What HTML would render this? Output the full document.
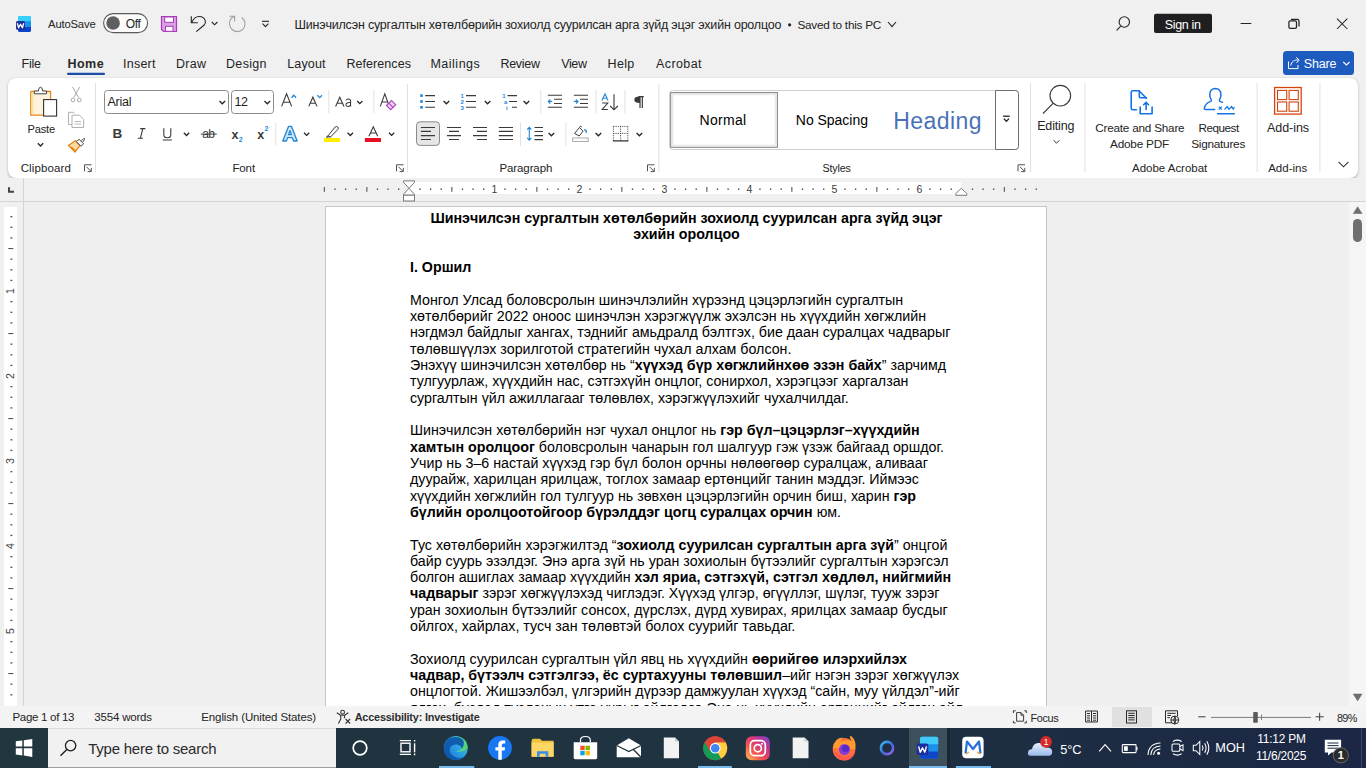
<!DOCTYPE html>
<html><head><meta charset="utf-8">
<style>
*{box-sizing:border-box;margin:0;padding:0}
html,body{width:1366px;height:768px;overflow:hidden;background:#f0f0f0;font-family:"Liberation Sans",sans-serif;color:#242424;position:relative}
.a{position:absolute}
.tx{position:absolute;white-space:nowrap;line-height:0;height:0}
svg.ov{position:absolute;left:0;top:0;width:1366px;height:768px;overflow:visible}
.ln{position:absolute;left:410px;white-space:nowrap;font-size:14.24px;line-height:16.36px;color:#000}
</style></head><body>

<!-- ribbon -->
<div class="a" style="left:8px;top:78px;width:1350px;height:100px;background:#fff;border-radius:8px;box-shadow:0 1.5px 3px rgba(0,0,0,0.2),0 0 1px rgba(0,0,0,0.12)"></div>

<!-- doc area -->
<div class="a" style="left:24px;top:202px;width:1325px;height:505px;background:#efefef"></div>
<div class="a" style="left:325px;top:206px;width:722px;height:520px;background:#fff;border:1px solid #c6c6c6"></div>

<div id="doctext">
<div class="ln" style="top:209.90px;left:410px;width:553px;text-align:center"><b>Шинэчилсэн сургалтын хөтөлбөрийн зохиолд суурилсан арга зүйд эцэг</b></div>
<div class="ln" style="top:226.23px;left:410px;width:553px;text-align:center"><b>эхийн оролцоо</b></div>
<div class="ln" style="top:258.89px"><b>I. Оршил</b></div>
<div class="ln" style="top:291.55px">Монгол Улсад боловсролын шинэчлэлийн хүрээнд цэцэрлэгийн сургалтын</div>
<div class="ln" style="top:307.88px">хөтөлбөрийг 2022 оноос шинэчлэн хэрэгжүүлж эхэлсэн нь хүүхдийн хөгжлийн</div>
<div class="ln" style="top:324.21px">нэгдмэл байдлыг хангах, тэднийг амьдралд бэлтгэх, бие даан суралцах чадварыг</div>
<div class="ln" style="top:340.54px">төлөвшүүлэх зорилготой стратегийн чухал алхам болсон.</div>
<div class="ln" style="top:356.87px">Энэхүү шинэчилсэн хөтөлбөр нь “<b>хүүхэд бүр хөгжлийнхөө эзэн байх</b>” зарчимд</div>
<div class="ln" style="top:373.20px">тулгуурлаж, хүүхдийн нас, сэтгэхүйн онцлог, сонирхол, хэрэгцээг харгалзан</div>
<div class="ln" style="top:389.53px">сургалтын үйл ажиллагааг төлөвлөх, хэрэгжүүлэхийг чухалчилдаг.</div>
<div class="ln" style="top:422.19px">Шинэчилсэн хөтөлбөрийн нэг чухал онцлог нь <b>гэр бүл–цэцэрлэг–хүүхдийн</b></div>
<div class="ln" style="top:438.52px"><b>хамтын оролцоог</b> боловсролын чанарын гол шалгуур гэж үзэж байгаад оршдог.</div>
<div class="ln" style="top:454.85px">Учир нь 3–6 настай хүүхэд гэр бүл болон орчны нөлөөгөөр суралцаж, аливааг</div>
<div class="ln" style="top:471.18px">дуурайж, харилцан ярилцаж, тоглох замаар ертөнцийг танин мэддэг. Иймээс</div>
<div class="ln" style="top:487.51px">хүүхдийн хөгжлийн гол тулгуур нь зөвхөн цэцэрлэгийн орчин биш, харин <b>гэр</b></div>
<div class="ln" style="top:503.84px"><b>бүлийн оролцоотойгоор бүрэлддэг цогц суралцах орчин</b> юм.</div>
<div class="ln" style="top:536.50px">Тус хөтөлбөрийн хэрэгжилтэд “<b>зохиолд суурилсан сургалтын арга зүй</b>” онцгой</div>
<div class="ln" style="top:552.83px">байр суурь эзэлдэг. Энэ арга зүй нь уран зохиолын бүтээлийг сургалтын хэрэгсэл</div>
<div class="ln" style="top:569.16px">болгон ашиглах замаар хүүхдийн <b>хэл яриа, сэтгэхүй, сэтгэл хөдлөл, нийгмийн</b></div>
<div class="ln" style="top:585.49px"><b>чадварыг</b> зэрэг хөгжүүлэхэд чиглэдэг. Хүүхэд үлгэр, өгүүллэг, шүлэг, тууж зэрэг</div>
<div class="ln" style="top:601.82px">уран зохиолын бүтээлийг сонсох, дүрслэх, дүрд хувирах, ярилцах замаар бусдыг</div>
<div class="ln" style="top:618.15px">ойлгох, хайрлах, тусч зан төлөвтэй болох суурийг тавьдаг.</div>
<div class="ln" style="top:650.81px">Зохиолд суурилсан сургалтын үйл явц нь хүүхдийн <b>өөрийгөө илэрхийлэх</b></div>
<div class="ln" style="top:667.14px"><b>чадвар, бүтээлч сэтгэлгээ, ёс суртахууны төлөвшил</b>–ийг нэгэн зэрэг хөгжүүлэх</div>
<div class="ln" style="top:683.47px">онцлогтой. Жишээлбэл, үлгэрийн дүрээр дамжуулан хүүхэд “сайн, муу үйлдэл”-ийг</div>
<div class="ln" style="top:699.80px">ялгах, бусдад туслахын утга учрыг ойлгодог. Энэ нь хүүхдийн ертөнцийг ойлгох ойл</div>
</div>

<!-- ruler band -->
<div class="a" style="left:0;top:178px;width:1366px;height:24px;background:#f0f0f0"></div>
<div class="a" style="left:409px;top:182px;width:552px;height:12px;background:#fff"></div>
<div class="a" style="left:0;top:201px;width:1366px;height:1px;background:#d4d4d4"></div>
<!-- vertical ruler -->
<div class="a" style="left:23px;top:178px;width:1px;height:529px;background:#d4d4d4"></div>
<div class="a" style="left:4px;top:207px;width:13px;height:500px;background:#fff"></div>
<!-- scrollbar -->
<div class="a" style="left:1349px;top:202px;width:17px;height:505px;background:#f5f5f5"></div>
<div class="a" style="left:1353px;top:219px;width:9px;height:23px;background:#6f6f6f;border-radius:4.5px"></div>

<!-- status bar -->
<div class="a" style="left:0;top:706px;width:1366px;height:22px;background:#f3f3f3"></div>
<div class="a" style="left:1112px;top:707px;width:40px;height:20px;background:#e0e0e0"></div>

<!-- taskbar -->
<div class="a" style="left:0;top:728px;width:1366px;height:40px;background:linear-gradient(90deg,#21363f 0%,#1f3240 55%,#1b2745 100%)"></div>
<div class="a" style="left:48px;top:728px;width:288px;height:40px;background:#f1f1f1;border-top:1px solid #dcdcdc;border-bottom:1px solid #a0a0a0"></div>
<div class="a" style="left:909px;top:728px;width:38px;height:40px;background:#3d505c"></div>

<svg class="ov" viewBox="0 0 1366 768">
<defs><g id="launch"><path d="M0.5 7 L0.5 0.5 L7.5 0.5" fill="none" stroke="#505050" stroke-width="1"/><path d="M2.5 2.5 L7 7 M7.3 3.6 L7.3 7.3 L3.6 7.3" fill="none" stroke="#505050" stroke-width="1"/></g>
<g id="chev"><path d="M0 0 L2.8 2.8 L5.6 0" fill="none" stroke="#242424" stroke-width="1.25"/></g></defs>
<!-- ===== TITLE BAR ===== -->
<!-- word icon -->
<rect x="18" y="16" width="13" height="16" rx="1.8" fill="#1a90e6"/>
<path d="M18 17.8 Q18 16 19.8 16 L29.2 16 Q31 16 31 17.8 L31 21.3 L18 21.3Z" fill="#36d1fb"/>
<path d="M18 26.9 L31 26.9 L31 30.2 Q31 32 29.2 32 L19.8 32 Q18 32 18 30.2Z" fill="#0b42c9"/>
<rect x="16" y="21" width="9" height="8.8" rx="1.5" fill="#1d2f9e"/>
<path d="M17.3 23.2 L18.6 27.8 L20.5 24.2 L22.4 27.8 L23.7 23.2" fill="none" stroke="#fff" stroke-width="1.3" stroke-linejoin="round"/>
<!-- autosave toggle -->
<rect x="103.6" y="13.6" width="44" height="19" rx="9.5" fill="#fbfbfb" stroke="#5a5a5a" stroke-width="1.1"/>
<circle cx="113.1" cy="23" r="6.8" fill="#5f5f5f"/>
<!-- save -->
<path d="M161.5 16.5 L176.5 16.5 L176.5 31.5 L163.5 31.5 L161.5 29.5Z" fill="#dc9fe6" stroke="#a83bb8" stroke-width="1.2"/>
<rect x="164.7" y="17" width="8.8" height="5.3" fill="#fff" stroke="#a83bb8" stroke-width="1"/>
<rect x="165.5" y="26.3" width="7.5" height="5" fill="#fff" stroke="#a83bb8" stroke-width="1"/>
<!-- undo -->
<path d="M191.3 16.2 L191.3 22.7 L197.8 22.7" fill="none" stroke="#242424" stroke-width="1.1"/>
<path d="M191.8 22.2 C194 17.5 198 15.8 201.5 16.8 C205.5 18 206.5 22.5 204.2 25 L196.3 31.6" fill="none" stroke="#242424" stroke-width="1.1"/>
<path d="M211.8 22 L214.6 24.8 L217.4 22" fill="none" stroke="#242424" stroke-width="1.1"/>
<!-- redo -->
<path d="M234.6 16.2 C231 17.5 229.3 20.5 229.5 24 C229.8 28.5 233.5 31.6 237.5 31.6 C241.8 31.6 245 28 245 24 C245 21.5 243.8 19 241.7 17.5" fill="none" stroke="#a0a0a0" stroke-width="1.1"/>
<path d="M229.4 16.2 L234.6 16.2 L234.6 21.4" fill="none" stroke="#a0a0a0" stroke-width="1.1"/>
<!-- customize -->
<path d="M262 21.3 L269 21.3" stroke="#242424" stroke-width="1.1"/>
<path d="M262.6 23.6 L265.5 26.6 L268.4 23.6" fill="none" stroke="#242424" stroke-width="1.1"/>
<!-- title bullet + chevron -->
<circle cx="789.6" cy="24.8" r="1.6" fill="#242424"/>
<path d="M888 22 L892 26.6 L896 22" fill="none" stroke="#242424" stroke-width="1.1"/>
<!-- search -->
<circle cx="1124.3" cy="22" r="5.2" fill="none" stroke="#242424" stroke-width="1.1"/>
<path d="M1116.6 30.4 L1120.6 26.3" stroke="#242424" stroke-width="1.2"/>
<!-- sign in -->
<rect x="1154" y="13.8" width="58" height="19.2" rx="2" fill="#1f1f1f"/>
<!-- window controls -->
<path d="M1240.6 23.5 L1251.3 23.5" stroke="#242424" stroke-width="1"/>
<rect x="1288.9" y="20.9" width="7.6" height="7.5" rx="1.3" fill="none" stroke="#242424" stroke-width="1.25"/>
<path d="M1291 19.4 L1297.2 19.4 Q1299 19.4 1299 21.2 L1299 26.4" fill="none" stroke="#242424" stroke-width="1.25"/>
<path d="M1337 18.7 L1347.3 29 M1347.3 18.7 L1337 29" stroke="#242424" stroke-width="1.05"/>

<!-- ===== TABS ===== -->
<rect x="67" y="72.8" width="38" height="2.2" rx="1" fill="#1a4ca8"/>
<rect x="1283" y="50.9" width="71" height="24" rx="3.5" fill="#1d5bbf"/>
<path d="M1288.5 61.5 L1288.5 68.6 L1298 68.6 L1298 65" fill="none" stroke="#fff" stroke-width="1"/>
<path d="M1290.8 65.5 C1291.5 61.5 1294.5 59.8 1298 60" fill="none" stroke="#fff" stroke-width="1"/>
<path d="M1296.2 57.4 L1299.2 60 L1296.5 63" fill="none" stroke="#fff" stroke-width="1"/>
<path d="M1343.3 62 L1346.4 65 L1349.6 62" fill="none" stroke="#fff" stroke-width="1.1"/>
<!-- ===== RIBBON: CLIPBOARD ===== -->
<path d="M30.8 91.5 L50.5 91.5 L50.5 99 M43 115 L30.8 115 L30.8 91.5" fill="none" stroke="#e8820c" stroke-width="1.3"/>
<rect x="32" y="92.8" width="17.8" height="21.6" fill="#fdf3dc"/><rect x="31.5" y="92.3" width="2" height="22" fill="#fbe3a6"/>
<path d="M34.3 93.8 L34.3 91 L38.3 91 Q38.6 87.2 40.5 87.2 Q42.4 87.2 42.7 91 L46.6 91 L46.6 93.8Z" fill="#fff" stroke="#444" stroke-width="1"/>
<rect x="43.6" y="99.6" width="13" height="16.5" fill="#fff" stroke="#333" stroke-width="1.1"/>
<path d="M37.8 143.3 L40.5 146 L43.2 143.3" fill="none" stroke="#242424" stroke-width="1.25"/>
<!-- cut -->
<path d="M72.5 86.8 L78.5 97.5 M79.8 86.8 L73.8 97.5" stroke="#a9a9a9" stroke-width="1"/>
<circle cx="73" cy="100" r="1.9" fill="none" stroke="#a9a9a9" stroke-width="1"/>
<circle cx="79.3" cy="100" r="1.9" fill="none" stroke="#a9a9a9" stroke-width="1"/>
<!-- copy -->
<path d="M72 124.5 L68.5 124.5 L68.5 112.3 L73.5 112.3 L74.5 113.5" fill="none" stroke="#b0b0b0" stroke-width="1"/>
<path d="M72 115.2 L79.5 115.2 L83.6 119.3 L83.6 127.5 L72 127.5Z" fill="#fff" stroke="#b0b0b0" stroke-width="1"/>
<path d="M74.5 121.5 L81 121.5 M74.5 124 L81 124" stroke="#b0b0b0" stroke-width="0.9"/>
<!-- format painter -->
<path d="M68.5 145.5 L75.5 140.5 L80 145.5 L75 152.2Z" fill="#fbd9a8" stroke="#e8820c" stroke-width="1.2"/>
<path d="M71 147 L76 151" stroke="#e8820c" stroke-width="1.2"/>
<path d="M76.5 141.8 L79 139.2 L83.5 143.8 L81 146.3Z" fill="#fff" stroke="#444" stroke-width="1"/>
<path d="M81.5 140.8 L83.8 138.5 Q84.8 138.2 84.5 139.5 L83 141.8" fill="none" stroke="#444" stroke-width="1"/>
<!-- launcher -->
<use href="#launch" x="84" y="164.3"/>
<rect x="95" y="83" width="1" height="89" fill="#e1e1e1"/>

<!-- ===== FONT ===== -->
<rect x="104.5" y="90.5" width="124" height="23" rx="3" fill="#fff" stroke="#8d8d8d" stroke-width="1"/>
<path d="M219.5 101 L222.3 103.8 L225.1 101" fill="none" stroke="#242424" stroke-width="1.25"/>
<rect x="231.5" y="90.5" width="42" height="23" rx="3" fill="#fff" stroke="#8d8d8d" stroke-width="1"/>
<path d="M264.5 101 L267.3 103.8 L270.1 101" fill="none" stroke="#242424" stroke-width="1.25"/>
<!-- grow/shrink -->
<path d="M281.6 106.4 L286.6 93.8 L291.6 106.4 M283.4 102.2 L289.8 102.2" fill="none" stroke="#3a3a3a" stroke-width="1.1"/>
<path d="M291.5 97.8 L293.8 95.3 L296.1 97.8" fill="none" stroke="#1f86d6" stroke-width="1.3"/>
<path d="M308.8 106.4 L312.9 97.2 L317 106.4 M310.2 103.2 L315.6 103.2" fill="none" stroke="#3a3a3a" stroke-width="1.1"/>
<path d="M317.4 95.2 L319.7 97.6 L322 95.2" fill="none" stroke="#1f86d6" stroke-width="1.3"/>
<rect x="328.3" y="90" width="1" height="23" fill="#e1e1e1"/>
<!-- Aa -->
<path d="M335.6 106.4 L339.8 97.2 L344 106.4 M336.9 103.3 L342.7 103.3" fill="none" stroke="#3a3a3a" stroke-width="1.1"/>
<path d="M350.6 101 Q350.5 99 348.3 99 Q346.4 99 346 100.4 M350.6 101 L350.6 106.4 M350.6 102.6 Q346 102.3 345.9 104.5 Q346 106.5 348 106.5 Q350.2 106.4 350.6 104.6" fill="none" stroke="#3a3a3a" stroke-width="1.05"/>
<path d="M357.2 101 L359.8 103.6 L362.4 101" fill="none" stroke="#242424" stroke-width="1.25"/>
<rect x="373.3" y="90" width="1" height="23" fill="#e1e1e1"/>
<!-- clear formatting -->
<path d="M380.3 106.4 L384.8 93.8 L389.3 106.4 M382 102 L387.6 102" fill="none" stroke="#3a3a3a" stroke-width="1.1"/>
<path d="M386.5 105.5 L391.5 100.5 L395.7 104.7 L390.7 109.7Z" fill="#f3d6f7" stroke="#b146c2" stroke-width="1.2"/>
<path d="M388.8 103.2 L393 107.4" stroke="#b146c2" stroke-width="1.2"/>
<!-- row 2 -->
<text x="112.4" y="138.2" font-family="Liberation Sans" font-weight="bold" font-size="13.5" fill="#3a3a3a">B</text>
<path d="M140.2 128.6 L145.4 128.6 M137.8 138.2 L143 138.2 M142.8 128.6 L140.4 138.2" fill="none" stroke="#3a3a3a" stroke-width="1.1"/>
<path d="M163.8 128.2 L163.8 134.5 Q163.8 137.8 167.3 137.8 Q170.8 137.8 170.8 134.5 L170.8 128.2 M162.7 140 L171.9 140" fill="none" stroke="#3a3a3a" stroke-width="1.1"/>
<path d="M183.8 132.8 L186.5 135.5 L189.2 132.8" fill="none" stroke="#242424" stroke-width="1.25"/>
<text x="202.3" y="138.4" font-family="Liberation Sans" font-size="12" fill="#3a3a3a" letter-spacing="-0.8">ab</text>
<path d="M200.8 134.1 L216.8 134.1" stroke="#3a3a3a" stroke-width="1"/>
<text x="231.5" y="138.5" font-family="Liberation Sans" font-weight="bold" font-size="12.5" fill="#3a3a3a">x</text>
<text x="238.8" y="142" font-family="Liberation Sans" font-weight="bold" font-size="7" fill="#1f86d6">2</text>
<text x="257.2" y="138.5" font-family="Liberation Sans" font-weight="bold" font-size="12.5" fill="#3a3a3a">x</text>
<text x="264.5" y="131" font-family="Liberation Sans" font-weight="bold" font-size="7" fill="#1f86d6">2</text>
<rect x="275.3" y="122.7" width="1" height="23" fill="#e1e1e1"/>
<!-- text effects -->
<path d="M282.8 141 L288.6 126.3 L291.4 126.3 L297.2 141 L293.6 141 L292.4 137.6 L287.6 137.6 L286.4 141Z M288.6 134.6 L291.4 134.6 L290 130.6Z" fill="#cfe6fa" stroke="#1f86d6" stroke-width="1.3" stroke-linejoin="round"/>
<path d="M304 132.8 L306.6 135.4 L309.2 132.8" fill="none" stroke="#242424" stroke-width="1.25"/>
<!-- highlight -->
<path d="M328 135.8 L335.2 127 Q336.5 125.8 337.8 127 Q339 128.3 337.8 129.5 L330.5 137 Z" fill="#fff" stroke="#3a3a3a" stroke-width="1"/>
<path d="M328 135.8 L326.3 137.2 L328.6 137 L330.5 137" fill="#777" stroke="#3a3a3a" stroke-width="0.9"/>
<rect x="323.9" y="138" width="16.2" height="4" fill="#ffee00"/>
<path d="M347.6 132.8 L350.3 135.5 L353 132.8" fill="none" stroke="#242424" stroke-width="1.25"/>
<!-- font color -->
<path d="M368.9 136.2 L373.3 126.8 L377.7 136.2 M370.3 133 L376.3 133" fill="none" stroke="#3a3a3a" stroke-width="1.1"/>
<rect x="364.9" y="138" width="16.1" height="4" fill="#e81123"/>
<path d="M389 132.8 L391.6 135.4 L394.2 132.8" fill="none" stroke="#242424" stroke-width="1.25"/>
<!-- launcher -->
<use href="#launch" x="396" y="164.3"/>
<rect x="407" y="84" width="1" height="88" fill="#e1e1e1"/>
<!-- ===== PARAGRAPH ===== -->
<g fill="#1f86d6"><rect x="420.2" y="94.3" width="2.6" height="2.6"/><rect x="420.2" y="100.2" width="2.6" height="2.6"/><rect x="420.2" y="106" width="2.6" height="2.6"/></g>
<path d="M425.2 95.6 L435 95.6 M425.2 101.5 L435 101.5 M425.2 107.3 L435 107.3" stroke="#3a3a3a" stroke-width="1.1"/>
<use href="#chev" x="443.6" y="101"/>
<g font-family="Liberation Sans" font-weight="bold" font-size="6" fill="#1f86d6"><text x="460.6" y="98.2">1</text><text x="460.6" y="104.1">2</text><text x="460.6" y="110">3</text></g>
<path d="M466 95.6 L476 95.6 M466 101.5 L476 101.5 M466 107.3 L476 107.3" stroke="#3a3a3a" stroke-width="1.1"/>
<use href="#chev" x="484.8" y="101"/>
<g font-family="Liberation Sans" font-weight="bold" font-size="6" fill="#1f86d6"><text x="502.2" y="98.2">1</text><text x="504" y="104.1">a</text><text x="506" y="110">i</text></g>
<path d="M507.5 95.6 L517 95.6 M509 101.5 L517 101.5 M512 107.3 L517 107.3" stroke="#3a3a3a" stroke-width="1.1"/>
<use href="#chev" x="523.6" y="101"/>
<rect x="540.3" y="90" width="1" height="23.5" fill="#e1e1e1"/>
<!-- indents -->
<path d="M547.8 95.3 L562 95.3 M554 99.3 L562 99.3 M554 103.5 L562 103.5 M547.8 107.3 L562 107.3" stroke="#3a3a3a" stroke-width="1.1"/>
<path d="M552.2 101.4 L548.3 101.4 M550.3 99.3 L548.3 101.4 L550.3 103.5" fill="none" stroke="#1f86d6" stroke-width="1.1"/>
<path d="M573.8 95.3 L588 95.3 M580 99.3 L588 99.3 M580 103.5 L588 103.5 M573.8 107.3 L588 107.3" stroke="#3a3a3a" stroke-width="1.1"/>
<path d="M573.8 101.4 L578 101.4 M576 99.3 L578 101.4 L576 103.5" fill="none" stroke="#1f86d6" stroke-width="1.1"/>
<rect x="595.4" y="90" width="1" height="23.5" fill="#e1e1e1"/>
<!-- sort -->
<path d="M602 100.5 L605 93.8 L608 100.5 M603 98.3 L607 98.3" fill="none" stroke="#1f86d6" stroke-width="1.1"/>
<path d="M602.2 103 L607.8 103 L602.2 109.5 L607.8 109.5" fill="none" stroke="#3a3a3a" stroke-width="1.1"/>
<path d="M614 94.3 L614 109.8 M610.2 106 L614 109.8 L617.8 106" fill="none" stroke="#3a3a3a" stroke-width="1.1"/>
<rect x="624.4" y="90" width="1" height="23.5" fill="#e1e1e1"/>
<!-- pilcrow -->
<path d="M638.5 96.6 L643.8 96.6 M640 96.6 L640 108 M642.3 96.6 L642.3 108" fill="none" stroke="#3a3a3a" stroke-width="1.2"/>
<path d="M640 96.6 Q634.3 96.5 634.3 99.8 Q634.3 103 640 103Z" fill="#3a3a3a"/>
<!-- align -->
<rect x="416.5" y="121.8" width="23" height="23.6" rx="3.5" fill="#e6e6e6" stroke="#8a8a8a" stroke-width="1"/>
<path d="M420.9 127.5 L435 127.5 M420.9 131.4 L431 131.4 M420.9 135.6 L435 135.6 M420.9 139.5 L431 139.5" stroke="#3a3a3a" stroke-width="1.1"/>
<path d="M446.9 127.5 L461 127.5 M449 131.4 L459 131.4 M446.9 135.6 L461 135.6 M449 139.5 L459 139.5" stroke="#3a3a3a" stroke-width="1.1"/>
<path d="M473 127.5 L487 127.5 M477 131.4 L487 131.4 M473 135.6 L487 135.6 M477 139.5 L487 139.5" stroke="#3a3a3a" stroke-width="1.1"/>
<path d="M498.8 127.5 L513 127.5 M498.8 131.4 L513 131.4 M498.8 135.6 L513 135.6 M498.8 139.5 L513 139.5" stroke="#3a3a3a" stroke-width="1.1"/>
<rect x="520" y="122.3" width="1" height="23.5" fill="#e1e1e1"/>
<!-- line spacing -->
<path d="M529.3 127.5 L529.3 140 M527.2 129.6 L529.3 127.3 L531.4 129.6 M527.2 137.9 L529.3 140.2 L531.4 137.9" fill="none" stroke="#1f86d6" stroke-width="1.1"/>
<path d="M534.5 127.5 L543 127.5 M534.5 131.5 L543 131.5 M534.5 135.6 L543 135.6 M534.5 139.6 L543 139.6" stroke="#3a3a3a" stroke-width="1.1"/>
<use href="#chev" x="548.6" y="133"/>
<rect x="565.4" y="122.3" width="1" height="23.5" fill="#e1e1e1"/>
<!-- shading -->
<path d="M574.5 133.5 L579.5 127.5 L583 131.2 L579.2 136 Z" fill="#fff" stroke="#3a3a3a" stroke-width="1"/>
<path d="M579.5 127.5 Q580 125.5 581.8 126.8" fill="none" stroke="#3a3a3a" stroke-width="1"/>
<path d="M584 130 Q586.5 129 586.2 132.8" fill="none" stroke="#1a6fc2" stroke-width="1.3"/>
<rect x="572.6" y="138" width="15.6" height="3.4" fill="#fff" stroke="#a0a0a0" stroke-width="0.9"/>
<use href="#chev" x="595.6" y="133"/>
<!-- borders -->
<path d="M613.4 126.4 L628 126.4 M613.4 126.4 L613.4 140.5 M627.8 126.4 L627.8 140.5 M620.6 126.4 L620.6 140.5 M613.4 133.4 L628 133.4" fill="none" stroke="#3a3a3a" stroke-width="1" stroke-dasharray="1 1.2"/>
<path d="M612.9 140.9 L628.3 140.9" stroke="#242424" stroke-width="1.2"/>
<use href="#chev" x="636.6" y="133"/>
<use href="#launch" x="647" y="164.3"/>
<rect x="658.3" y="84" width="1" height="88" fill="#e1e1e1"/>

<!-- ===== STYLES ===== -->
<rect x="669.5" y="90.5" width="349" height="59" rx="3" fill="#fff" stroke="#d0d0d0" stroke-width="1"/>
<rect x="670.8" y="92.7" width="106.5" height="54.5" fill="#fff" stroke="#6e6e6e" stroke-width="1"/>
<rect x="672.3" y="94.2" width="103.5" height="51.5" fill="none" stroke="#e8e8e8" stroke-width="2"/>
<path d="M995.5 90.5 L1015.5 90.5 Q1018.5 90.5 1018.5 93.5 L1018.5 146.5 Q1018.5 149.5 1015.5 149.5 L995.5 149.5Z" fill="#fff" stroke="#6e6e6e" stroke-width="1"/>
<path d="M1003.1 116.2 L1009.7 116.2" stroke="#242424" stroke-width="1.3"/>
<path d="M1003.8 118.6 L1006.4 121.3 L1009 118.6" fill="none" stroke="#242424" stroke-width="1.3"/>
<use href="#launch" x="1017.5" y="164.3"/>
<rect x="1030" y="83" width="1" height="89" fill="#e1e1e1"/>

<!-- ===== EDITING ===== -->
<circle cx="1060.3" cy="95.7" r="10.3" fill="none" stroke="#3a3a3a" stroke-width="1.1"/>
<path d="M1043 113.5 L1053.3 103.2" stroke="#3a3a3a" stroke-width="1.1"/>
<path d="M1053.6 140.3 L1056.5 143.2 L1059.4 140.3" fill="none" stroke="#303030" stroke-width="1"/>
<rect x="1084.4" y="83" width="1" height="89" fill="#e1e1e1"/>

<!-- ===== ACROBAT ===== -->
<g fill="none" stroke="#1473e6" stroke-width="1.6" stroke-linejoin="round" stroke-linecap="round">
<path d="M1136.5 109.8 L1132.8 109.8 Q1131.2 109.8 1131.2 108.2 L1131.2 92.4 Q1131.2 90.8 1132.8 90.8 L1139 90.8 L1146.4 98.2"/>
<path d="M1139.3 91 L1139.3 96.6 Q1139.3 97.8 1140.5 97.8 L1146.4 97.8"/>
<path d="M1140.2 107 L1140.2 113.8 L1152.1 113.8 L1152.1 107"/>
<path d="M1146.1 109.6 L1146.1 102.4 M1143.6 104.8 L1146.1 102.3 L1148.6 104.8"/>
</g>
<!-- request signatures -->
<g fill="none" stroke="#1473e6" stroke-width="1.5" stroke-linecap="round">
<path d="M1214.6 109.5 L1205.5 109.5 Q1204.2 109.5 1204.4 108 Q1205.2 103.5 1210.6 101.4 Q1211.8 100.8 1211.2 99.8 Q1209.6 97.5 1209.8 94 Q1210.3 88.6 1215.3 88.4 Q1220.5 88.6 1220.9 94 Q1221.2 97.5 1219.5 99.8 Q1219 100.8 1220.2 101.4 Q1221.6 101.8 1222.5 102.3"/>
<path d="M1217.6 113.8 L1234.3 113.8" stroke-width="1.6"/>
</g>
<g fill="none" stroke="#1473e6" stroke-width="1.2">
<path d="M1218.8 106.6 L1221.8 109.6 M1221.8 106.6 L1218.8 109.6"/>
<path d="M1224.5 109.6 L1227.2 106.6 L1229 109.4 L1231.6 106.6 L1233.2 109.2 L1234.5 107.2"/>
</g>
<rect x="1256.6" y="83" width="1" height="89" fill="#e1e1e1"/>

<!-- ===== ADD-INS ===== -->
<rect x="1274.6" y="87.5" width="26.6" height="26.6" fill="none" stroke="#d3450f" stroke-width="1.3"/>
<rect x="1277.5" y="90.4" width="9.2" height="9.2" fill="none" stroke="#d3450f" stroke-width="1.1"/>
<rect x="1289.1" y="90.4" width="9.2" height="9.2" fill="none" stroke="#d3450f" stroke-width="1.1"/>
<rect x="1277.5" y="102" width="9.2" height="9.2" fill="none" stroke="#d3450f" stroke-width="1.1"/>
<rect x="1289.1" y="102" width="9.2" height="9.2" fill="none" stroke="#d3450f" stroke-width="1.1"/>
<rect x="1319.4" y="83" width="1" height="89" fill="#e1e1e1"/>
<path d="M1338.6 161.8 L1343.5 166.8 L1348.4 161.8" fill="none" stroke="#303030" stroke-width="1.1"/>
<rect x="323.80" y="187" width="1.1" height="4.8" fill="#555"/>
<rect x="334.32" y="188.4" width="1.3" height="1.6" fill="#555"/>
<rect x="344.95" y="188.4" width="1.3" height="1.6" fill="#555"/>
<rect x="355.57" y="188.4" width="1.3" height="1.6" fill="#555"/>
<rect x="366.30" y="187" width="1.1" height="4.8" fill="#555"/>
<rect x="376.82" y="188.4" width="1.3" height="1.6" fill="#555"/>
<rect x="387.45" y="188.4" width="1.3" height="1.6" fill="#555"/>
<rect x="398.07" y="188.4" width="1.3" height="1.6" fill="#555"/>
<rect x="419.32" y="188.4" width="1.3" height="1.6" fill="#555"/>
<rect x="429.95" y="188.4" width="1.3" height="1.6" fill="#555"/>
<rect x="440.57" y="188.4" width="1.3" height="1.6" fill="#555"/>
<rect x="451.30" y="187" width="1.1" height="4.8" fill="#555"/>
<rect x="461.82" y="188.4" width="1.3" height="1.6" fill="#555"/>
<rect x="472.45" y="188.4" width="1.3" height="1.6" fill="#555"/>
<rect x="483.07" y="188.4" width="1.3" height="1.6" fill="#555"/>
<text x="494.30" y="193.2" font-family="Liberation Sans" font-size="10.5" fill="#3c3c3c" text-anchor="middle">1</text>
<rect x="504.32" y="188.4" width="1.3" height="1.6" fill="#555"/>
<rect x="514.95" y="188.4" width="1.3" height="1.6" fill="#555"/>
<rect x="525.57" y="188.4" width="1.3" height="1.6" fill="#555"/>
<rect x="536.30" y="187" width="1.1" height="4.8" fill="#555"/>
<rect x="546.82" y="188.4" width="1.3" height="1.6" fill="#555"/>
<rect x="557.45" y="188.4" width="1.3" height="1.6" fill="#555"/>
<rect x="568.07" y="188.4" width="1.3" height="1.6" fill="#555"/>
<text x="579.30" y="193.2" font-family="Liberation Sans" font-size="10.5" fill="#3c3c3c" text-anchor="middle">2</text>
<rect x="589.32" y="188.4" width="1.3" height="1.6" fill="#555"/>
<rect x="599.95" y="188.4" width="1.3" height="1.6" fill="#555"/>
<rect x="610.57" y="188.4" width="1.3" height="1.6" fill="#555"/>
<rect x="621.30" y="187" width="1.1" height="4.8" fill="#555"/>
<rect x="631.82" y="188.4" width="1.3" height="1.6" fill="#555"/>
<rect x="642.45" y="188.4" width="1.3" height="1.6" fill="#555"/>
<rect x="653.07" y="188.4" width="1.3" height="1.6" fill="#555"/>
<text x="664.30" y="193.2" font-family="Liberation Sans" font-size="10.5" fill="#3c3c3c" text-anchor="middle">3</text>
<rect x="674.32" y="188.4" width="1.3" height="1.6" fill="#555"/>
<rect x="684.95" y="188.4" width="1.3" height="1.6" fill="#555"/>
<rect x="695.57" y="188.4" width="1.3" height="1.6" fill="#555"/>
<rect x="706.30" y="187" width="1.1" height="4.8" fill="#555"/>
<rect x="716.82" y="188.4" width="1.3" height="1.6" fill="#555"/>
<rect x="727.45" y="188.4" width="1.3" height="1.6" fill="#555"/>
<rect x="738.07" y="188.4" width="1.3" height="1.6" fill="#555"/>
<text x="749.30" y="193.2" font-family="Liberation Sans" font-size="10.5" fill="#3c3c3c" text-anchor="middle">4</text>
<rect x="759.32" y="188.4" width="1.3" height="1.6" fill="#555"/>
<rect x="769.95" y="188.4" width="1.3" height="1.6" fill="#555"/>
<rect x="780.57" y="188.4" width="1.3" height="1.6" fill="#555"/>
<rect x="791.30" y="187" width="1.1" height="4.8" fill="#555"/>
<rect x="801.82" y="188.4" width="1.3" height="1.6" fill="#555"/>
<rect x="812.45" y="188.4" width="1.3" height="1.6" fill="#555"/>
<rect x="823.07" y="188.4" width="1.3" height="1.6" fill="#555"/>
<text x="834.30" y="193.2" font-family="Liberation Sans" font-size="10.5" fill="#3c3c3c" text-anchor="middle">5</text>
<rect x="844.32" y="188.4" width="1.3" height="1.6" fill="#555"/>
<rect x="854.95" y="188.4" width="1.3" height="1.6" fill="#555"/>
<rect x="865.57" y="188.4" width="1.3" height="1.6" fill="#555"/>
<rect x="876.30" y="187" width="1.1" height="4.8" fill="#555"/>
<rect x="886.82" y="188.4" width="1.3" height="1.6" fill="#555"/>
<rect x="897.45" y="188.4" width="1.3" height="1.6" fill="#555"/>
<rect x="908.07" y="188.4" width="1.3" height="1.6" fill="#555"/>
<text x="919.30" y="193.2" font-family="Liberation Sans" font-size="10.5" fill="#3c3c3c" text-anchor="middle">6</text>
<rect x="929.32" y="188.4" width="1.3" height="1.6" fill="#555"/>
<rect x="939.95" y="188.4" width="1.3" height="1.6" fill="#555"/>
<rect x="950.57" y="188.4" width="1.3" height="1.6" fill="#555"/>
<rect x="971.82" y="188.4" width="1.3" height="1.6" fill="#555"/>
<rect x="982.45" y="188.4" width="1.3" height="1.6" fill="#555"/>
<rect x="993.07" y="188.4" width="1.3" height="1.6" fill="#555"/>
<rect x="1003.80" y="187" width="1.1" height="4.8" fill="#555"/>
<rect x="1014.32" y="188.4" width="1.3" height="1.6" fill="#555"/>
<rect x="1024.95" y="188.4" width="1.3" height="1.6" fill="#555"/>
<rect x="1035.58" y="188.4" width="1.3" height="1.6" fill="#555"/>
<path d="M403.5 180.9 L414.5 180.9 L414.5 182.3 L409 188.3 L403.5 182.3Z" fill="#fff" stroke="#7a7a7a" stroke-width="1"/>
<path d="M409 188.3 L414.5 194.3 L414.5 195.2 L403.5 195.2 L403.5 194.3Z" fill="#fff" stroke="#7a7a7a" stroke-width="1"/>
<rect x="403.5" y="195.2" width="11" height="5.8" fill="#fff" stroke="#7a7a7a" stroke-width="1"/>
<path d="M955.8 195.3 L955.8 193.5 L961.3 188.3 L966.8 193.5 L966.8 195.3Z" fill="#fff" stroke="#7a7a7a" stroke-width="1"/>
<rect x="10.4" y="216.03" width="2" height="1.3" fill="#555"/>
<rect x="10.4" y="226.65" width="2" height="1.3" fill="#555"/>
<rect x="10.4" y="237.28" width="2" height="1.3" fill="#555"/>
<rect x="8.3" y="248.00" width="5" height="1.1" fill="#555"/>
<rect x="10.4" y="258.52" width="2" height="1.3" fill="#555"/>
<rect x="10.4" y="269.15" width="2" height="1.3" fill="#555"/>
<rect x="10.4" y="279.77" width="2" height="1.3" fill="#555"/>
<text x="0" y="0" transform="translate(14.2 291.00) rotate(-90)" font-family="Liberation Sans" font-size="10.5" fill="#3c3c3c" text-anchor="middle">1</text>
<rect x="10.4" y="301.02" width="2" height="1.3" fill="#555"/>
<rect x="10.4" y="311.65" width="2" height="1.3" fill="#555"/>
<rect x="10.4" y="322.27" width="2" height="1.3" fill="#555"/>
<rect x="8.3" y="333.00" width="5" height="1.1" fill="#555"/>
<rect x="10.4" y="343.52" width="2" height="1.3" fill="#555"/>
<rect x="10.4" y="354.15" width="2" height="1.3" fill="#555"/>
<rect x="10.4" y="364.77" width="2" height="1.3" fill="#555"/>
<text x="0" y="0" transform="translate(14.2 376.00) rotate(-90)" font-family="Liberation Sans" font-size="10.5" fill="#3c3c3c" text-anchor="middle">2</text>
<rect x="10.4" y="386.02" width="2" height="1.3" fill="#555"/>
<rect x="10.4" y="396.65" width="2" height="1.3" fill="#555"/>
<rect x="10.4" y="407.27" width="2" height="1.3" fill="#555"/>
<rect x="8.3" y="418.00" width="5" height="1.1" fill="#555"/>
<rect x="10.4" y="428.52" width="2" height="1.3" fill="#555"/>
<rect x="10.4" y="439.15" width="2" height="1.3" fill="#555"/>
<rect x="10.4" y="449.77" width="2" height="1.3" fill="#555"/>
<text x="0" y="0" transform="translate(14.2 461.00) rotate(-90)" font-family="Liberation Sans" font-size="10.5" fill="#3c3c3c" text-anchor="middle">3</text>
<rect x="10.4" y="471.02" width="2" height="1.3" fill="#555"/>
<rect x="10.4" y="481.65" width="2" height="1.3" fill="#555"/>
<rect x="10.4" y="492.27" width="2" height="1.3" fill="#555"/>
<rect x="8.3" y="503.00" width="5" height="1.1" fill="#555"/>
<rect x="10.4" y="513.52" width="2" height="1.3" fill="#555"/>
<rect x="10.4" y="524.15" width="2" height="1.3" fill="#555"/>
<rect x="10.4" y="534.77" width="2" height="1.3" fill="#555"/>
<text x="0" y="0" transform="translate(14.2 546.00) rotate(-90)" font-family="Liberation Sans" font-size="10.5" fill="#3c3c3c" text-anchor="middle">4</text>
<rect x="10.4" y="556.02" width="2" height="1.3" fill="#555"/>
<rect x="10.4" y="566.65" width="2" height="1.3" fill="#555"/>
<rect x="10.4" y="577.27" width="2" height="1.3" fill="#555"/>
<rect x="8.3" y="588.00" width="5" height="1.1" fill="#555"/>
<rect x="10.4" y="598.52" width="2" height="1.3" fill="#555"/>
<rect x="10.4" y="609.15" width="2" height="1.3" fill="#555"/>
<rect x="10.4" y="619.77" width="2" height="1.3" fill="#555"/>
<text x="0" y="0" transform="translate(14.2 631.00) rotate(-90)" font-family="Liberation Sans" font-size="10.5" fill="#3c3c3c" text-anchor="middle">5</text>
<rect x="10.4" y="641.02" width="2" height="1.3" fill="#555"/>
<rect x="10.4" y="651.65" width="2" height="1.3" fill="#555"/>
<rect x="10.4" y="662.27" width="2" height="1.3" fill="#555"/>
<rect x="8.3" y="673.00" width="5" height="1.1" fill="#555"/>
<rect x="10.4" y="683.52" width="2" height="1.3" fill="#555"/>
<rect x="10.4" y="694.15" width="2" height="1.3" fill="#555"/><path d="M9 187.3 L9 191.8 L14 191.8" fill="none" stroke="#444" stroke-width="2"/>
<!-- scrollbar arrows -->
<path d="M1353.3 213.5 L1357.6 206.8 L1362 213.5Z" fill="#6f6f6f" stroke="#6f6f6f" stroke-width="0.6" stroke-linejoin="round"/>
<path d="M1353.3 694 L1362 694 L1357.6 700.9Z" fill="#6f6f6f" stroke="#6f6f6f" stroke-width="0.6" stroke-linejoin="round"/>
<!-- status: accessibility -->
<g fill="none" stroke="#333" stroke-width="1.1" stroke-linejoin="round">
<circle cx="342.6" cy="712.2" r="1.9"/>
<path d="M336.8 712.8 L340.6 715.3 L344.6 715.3 L348.4 712.8"/>
<path d="M340.6 715.3 L340.8 719 L338.4 723.6 M344.6 715.3 L344.4 718.2"/>
<path d="M345.6 719 L350.1 723.5 M350.1 719 L345.6 723.5"/>
</g>
<!-- status: focus -->
<g fill="none" stroke="#3a3a3a" stroke-width="1">
<path d="M1013.4 713 L1013.4 710.8 L1015.6 710.8 M1024.3 710.8 L1026.3 710.8 L1026.3 713 M1026.3 720.8 L1026.3 722.9 L1024.3 722.9 M1015.6 722.9 L1013.4 722.9 L1013.4 720.8"/>
<path d="M1016.6 712.6 L1021 712.6 L1023.6 715.2 L1023.6 721.2 L1016.6 721.2Z M1021 712.6 L1021 715.2 L1023.6 715.2"/>
</g>
<!-- read mode -->
<g fill="none" stroke="#2a2a2a" stroke-width="1">
<path d="M1085.6 711 L1091.5 711 L1091.5 722 L1085.6 722Z M1091.5 711 L1097.4 711 L1097.4 722 L1091.5 722"/>
<path d="M1087 713.5 L1090 713.5 M1087 715.8 L1090 715.8 M1087 718 L1090 718 M1087 720.2 L1090 720.2 M1093 713.5 L1096 713.5 M1093 715.8 L1096 715.8 M1093 718 L1096 718 M1093 720.2 L1096 720.2"/>
</g>
<!-- print layout -->
<g fill="none" stroke="#2a2a2a" stroke-width="1">
<rect x="1126.5" y="710.8" width="10" height="12.2"/>
<path d="M1128.3 713.3 L1134.7 713.3 M1128.3 715.5 L1134.7 715.5 M1128.3 717.7 L1134.7 717.7 M1128.3 719.9 L1134.7 719.9"/>
</g>
<!-- web layout -->
<g fill="none" stroke="#2a2a2a" stroke-width="1">
<path d="M1172 722.8 L1165.5 722.8 L1165.5 710.8 L1177.5 710.8 L1177.5 716"/>
<path d="M1167.3 713.3 L1175.7 713.3 M1167.3 715.5 L1171 715.5 M1167.3 717.7 L1170 717.7"/>
<circle cx="1174.8" cy="720" r="4" fill="#f3f3f3"/>
<path d="M1170.8 720 L1178.8 720 M1174.8 716 Q1172.8 720 1174.8 724 Q1176.8 720 1174.8 716"/>
</g>
<!-- zoom slider -->
<path d="M1198.3 716.8 L1205.5 716.8" stroke="#3a3a3a" stroke-width="1"/>
<rect x="1211" y="716.9" width="100" height="1" fill="#7a7a7a"/>
<rect x="1261" y="714.6" width="1" height="5.4" fill="#7a7a7a"/>
<rect x="1253.2" y="712" width="4.6" height="10.8" rx="0.8" fill="#5a5a5a"/>
<path d="M1315.6 716.8 L1323.7 716.8 M1319.65 712.8 L1319.65 720.8" stroke="#3a3a3a" stroke-width="1"/>

<!-- ===== TASKBAR ===== -->
<!-- windows logo -->
<path d="M15.8 741.3 L22.3 740.4 L22.3 746.6 L15.8 746.6Z M23.8 740.2 L32.3 739 L32.3 746.6 L23.8 746.6Z M15.8 748.3 L22.3 748.3 L22.3 755.4 L15.8 754.5Z M23.8 748.3 L32.3 748.3 L32.3 757 L23.8 755.6Z" fill="#fff"/>
<!-- search icon -->
<circle cx="70.6" cy="745.6" r="5.2" fill="none" stroke="#1f1f1f" stroke-width="1.3"/>
<path d="M60.5 755.8 L66.8 749.5" stroke="#1f1f1f" stroke-width="1.4"/>
<!-- cortana -->
<circle cx="360" cy="748" r="6.8" fill="none" stroke="#fff" stroke-width="1.7"/>
<!-- task view -->
<g fill="none" stroke="#fff" stroke-width="1.4">
<path d="M399.8 740.6 L411 740.6 M399.8 754.4 L411 754.4"/><rect x="401" y="743.2" width="9" height="8.6"/>
<path d="M414.6 740 L414.6 741.6 M414.6 743.2 L414.6 752.2 M414.6 753.6 L414.6 755.2"/>
</g>
<!-- edge -->
<defs>
<linearGradient id="edgeg" x1="0" y1="1" x2="1" y2="0"><stop offset="0" stop-color="#1b6fcf"/><stop offset="0.55" stop-color="#2ba3e6"/><stop offset="1" stop-color="#5fd88a"/></linearGradient>
<linearGradient id="tbg" x1="0" y1="0" x2="1" y2="0"><stop offset="0" stop-color="#21363f"/><stop offset="0.6" stop-color="#1e2f40"/><stop offset="1" stop-color="#1a2745"/></linearGradient>
<radialGradient id="chromeg"><stop offset="0" stop-color="#fff"/></radialGradient>
<linearGradient id="instag" x1="0" y1="1" x2="1" y2="0"><stop offset="0" stop-color="#fdc355"/><stop offset="0.35" stop-color="#f3524a"/><stop offset="0.7" stop-color="#c7338c"/><stop offset="1" stop-color="#6f4bd8"/></linearGradient>
<linearGradient id="cloudg" x1="0" y1="0" x2="0" y2="1"><stop offset="0" stop-color="#e8f2ff"/><stop offset="1" stop-color="#98b8e8"/></linearGradient>
<linearGradient id="ringg" x1="0" y1="0" x2="1" y2="1"><stop offset="0" stop-color="#37c2f0"/><stop offset="0.5" stop-color="#3b6de0"/><stop offset="1" stop-color="#a05ce8"/></linearGradient>
</defs>
<circle cx="455.8" cy="748" r="12" fill="url(#edgeg)"/>
<path d="M443.9 749.5 Q444.5 758.5 454 760 Q459.5 760.5 463.5 757.5 Q456 759 451.5 754.5 Q448.5 751 450.5 747 Q452.5 744 457 744.5 Q461.5 745.5 462.5 749.5 L467.8 749.5 Q467.5 743 463 739.5 Q457 735.5 450 738 Q444 741 443.9 749.5Z" fill="#0c55a8" opacity="0.9"/>
<path d="M456 751.5 Q462 752.5 467.7 749 Q467.5 741 461 737.5 Q466 742 462.5 748 Q460 751 456 751.5Z" fill="#56d47c"/>
<rect x="439" y="766" width="35.3" height="2" fill="#76b9ed"/>
<!-- facebook -->
<circle cx="500" cy="747.8" r="11.9" fill="#1877f2"/>
<path d="M501.8 759.8 L501.8 750.5 L504.6 750.5 L505.1 747.2 L501.8 747.2 L501.8 745.2 Q501.8 743.5 503.5 743.5 L505.2 743.5 L505.2 740.6 Q504 740.4 502.5 740.4 Q498.3 740.4 498.3 744.8 L498.3 747.2 L495.4 747.2 L495.4 750.5 L498.3 750.5 L498.3 759.8Z" fill="#fff"/>
<!-- explorer -->
<path d="M531.6 740.5 Q531.6 738.7 533.4 738.7 L540 738.7 L542 740.7 L553.6 740.7 L553.6 756.7 L531.6 756.7Z" fill="#f0c23b"/>
<rect x="531.6" y="742.5" width="22" height="14.2" fill="#fcd667"/>
<path d="M537 756.7 L537 751.3 L548.3 751.3 L548.3 756.7 L545.5 756.7 L545.5 753.8 L539.8 753.8 L539.8 756.7Z" fill="#3a8ee8"/>
<!-- store -->
<path d="M573.7 742.3 L597.2 742.3 L597.2 757.8 Q597.2 759.2 595.8 759.2 L575.1 759.2 Q573.7 759.2 573.7 757.8Z" fill="#fff"/>
<path d="M580.5 742.5 L580.5 740 Q580.5 736.5 585.4 736.5 Q590.3 736.5 590.3 740 L590.3 742.5" fill="none" stroke="#fff" stroke-width="1.2"/>
<rect x="580.3" y="745.7" width="4.4" height="4.4" fill="#f25022"/><rect x="585.5" y="745.7" width="4.4" height="4.4" fill="#7fba00"/>
<rect x="580.3" y="750.9" width="4.4" height="4.4" fill="#00a4ef"/><rect x="585.5" y="750.9" width="4.4" height="4.4" fill="#ffb900"/>
<!-- mail -->
<path d="M616.7 745.5 L628.8 738.2 L641 745.5 L641 757.3 L616.7 757.3Z" fill="#fff"/>
<path d="M616.7 745.5 L628.8 751.5 L641 745.5 M633 749 L641 757.3" fill="none" stroke="#20333d" stroke-width="1.3"/>
<!-- file -->
<path d="M663.8 737.4 L675 737.4 L679 741.4 L679 758.2 L663.8 758.2Z" fill="#f2f2f2"/>
<path d="M675 737.4 L675 741.4 L679 741.4" fill="#c9c9c9"/>
<!-- chrome -->
<circle cx="715.2" cy="748.2" r="12" fill="#db4437"/>
<path d="M715.2 748.2 L704.8 754.2 A12 12 0 0 0 721.2 758.6Z" fill="#0f9d58"/>
<path d="M715.2 748.2 L721.2 758.6 A12 12 0 0 0 725.6 742.2 L715.2 742.2Z" fill="#ffcd40"/>
<path d="M715.2 748.2 L704.8 754.2 A12 12 0 0 1 704.8 742.2 Z" fill="#0f9d58"/>
<path d="M715.2 736.2 A12 12 0 0 0 704.8 742.2 L710 751.2 L715.2 742.2 L725.6 742.2 A12 12 0 0 0 715.2 736.2Z" fill="#db4437"/>
<circle cx="715.2" cy="748.2" r="5.4" fill="#fff"/>
<circle cx="715.2" cy="748.2" r="4.3" fill="#4285f4"/>
<rect x="698" y="766" width="33.8" height="2" fill="#76b9ed"/>
<!-- instagram -->
<rect x="745.8" y="736.2" width="24" height="24" rx="6" fill="url(#instag)"/>
<rect x="750.3" y="740.7" width="15" height="15" rx="4.2" fill="none" stroke="#fff" stroke-width="1.7"/>
<circle cx="757.8" cy="748.2" r="3.6" fill="none" stroke="#fff" stroke-width="1.7"/>
<circle cx="762" cy="743.8" r="1" fill="#fff"/>
<!-- file 2 -->
<path d="M792.7 737.4 L804.5 737.4 L808.5 741.4 L808.5 758.2 L792.7 758.2Z" fill="#f2f2f2"/>
<path d="M804.5 737.4 L804.5 741.4 L808.5 741.4" fill="#c9c9c9"/>
<!-- firefox -->
<circle cx="844" cy="749.2" r="11.3" fill="#ff7139"/>
<path d="M833 748 Q834 738 843 737.5 Q839.5 740.5 841 742 Q846 739 852 741.5 Q848.5 736.5 851 735.8 Q856.8 741 855.3 749.2" fill="#ff9a2e"/>
<circle cx="844.5" cy="749.5" r="5.5" fill="#8a3cd6"/>
<circle cx="845.5" cy="748.5" r="3.6" fill="#592acb"/>
<path d="M833 749.5 Q835 758 844 760.5 Q852.5 760.8 855.3 752 Q852 757 845 756.5 Q838 756 833 749.5Z" fill="#ff4f5e" opacity="0.7"/>
<!-- ring -->
<circle cx="887" cy="748" r="6.1" fill="none" stroke="url(#ringg)" stroke-width="2.6"/>
<!-- word taskbar -->
<rect x="920" y="736.8" width="18.2" height="21.9" rx="2" fill="#1a90e6"/>
<path d="M920 738.8 Q920 736.8 922 736.8 L936.2 736.8 Q938.2 736.8 938.2 738.8 L938.2 744.2 L920 744.2Z" fill="#41c9f8"/>
<path d="M920 751.4 L938.2 751.4 L938.2 756.7 Q938.2 758.7 936.2 758.7 L922 758.7 Q920 758.7 920 756.7Z" fill="#1045c8"/>
<rect x="916.8" y="743.5" width="11.5" height="11.5" rx="1.5" fill="#1d2f9e"/>
<path d="M918.6 746.4 L920.3 752.2 L922.5 747.8 L924.8 752.2 L926.5 746.4" fill="none" stroke="#fff" stroke-width="1.4" stroke-linejoin="round"/>
<rect x="909" y="766" width="38" height="2" fill="#76b9ed"/>
<rect x="947" y="728" width="3" height="40" fill="#1a2730"/>
<!-- M app -->
<rect x="962.2" y="736.8" width="21.4" height="21.4" rx="4" fill="#fff"/>
<path d="M965.5 753.5 L967 741.5 L973 749 L979 741.5 L980.5 753.5" fill="none" stroke="#2670d8" stroke-width="2.2" stroke-linejoin="round"/>
<path d="M966 754 L969 752 M980 754 L977 752" stroke="#f4a620" stroke-width="1.4"/>
<rect x="955.8" y="766" width="35.2" height="2" fill="#76b9ed"/>
<!-- weather -->
<path d="M1030.5 755.8 Q1027.5 755.8 1028 752.5 Q1028.5 749 1032 749.2 Q1032.8 743.5 1038.5 743 Q1044 742.8 1045.8 747.5 Q1051.8 747 1052.2 751.5 Q1052.3 755.8 1048.5 755.8Z" fill="url(#cloudg)"/>
<circle cx="1046" cy="741.9" r="5.9" fill="#d52b2b"/>
<text x="1046" y="745.2" font-family="Liberation Sans" font-size="8.5" fill="#fff" text-anchor="middle">1</text>
<!-- tray -->
<path d="M1099.2 751.3 L1105.1 744.6 L1111 751.3" fill="none" stroke="#fff" stroke-width="1.1"/>
<rect x="1122.3" y="744.6" width="13.8" height="8" rx="0.8" fill="none" stroke="#fff" stroke-width="1.1"/>
<rect x="1136.2" y="747" width="1.3" height="3.2" fill="#fff"/>
<rect x="1124" y="746.3" width="3.8" height="4.6" fill="#fff"/>
<g fill="none" stroke="#fff" stroke-width="1.05">
<path d="M1148 755 Q1148.5 743.5 1160.5 743"/>
<path d="M1150.8 755 Q1151.2 746.5 1160.5 746"/>
<path d="M1153.6 755 Q1154 749.5 1160.5 749"/>
</g>
<circle cx="1158.6" cy="753.3" r="1.5" fill="#fff"/>
<g fill="none" stroke="#fff" stroke-width="1.05">
<path d="M1173 741.5 Q1177.3 738.8 1181.7 741.5 M1173 753.8 Q1177.3 756.5 1181.7 753.8"/>
<rect x="1172" y="744" width="7.8" height="7.3" rx="1"/>
<path d="M1179.8 746.5 L1183 744.8 L1183 750.6 L1179.8 748.8"/>
</g>
<g fill="none" stroke="#fff" stroke-width="1.05">
<path d="M1193.3 745.3 L1196 745.3 L1199.8 741.5 L1199.8 754.5 L1196 750.7 L1193.3 750.7Z"/>
<path d="M1202.3 745.5 Q1203.8 748 1202.3 750.5 M1204.6 743.2 Q1207.5 748 1204.6 752.8 M1206.8 741.2 Q1210.8 748 1206.8 754.8"/>
</g>
<!-- notification -->
<path d="M1324.8 739.8 L1341.1 739.8 L1341.1 752.4 L1331.5 752.4 L1328 755.4 L1328 752.4 L1324.8 752.4Z" fill="#fff"/>
<path d="M1327.5 743 L1338.5 743 M1327.5 745.6 L1338.5 745.6 M1327.5 748.2 L1338.5 748.2" stroke="#1b2744" stroke-width="1"/>
<circle cx="1340.8" cy="755.3" r="7.6" fill="#2b2b2b" stroke="#6a6a6a" stroke-width="1"/>
<text x="1340.8" y="759.3" font-family="Liberation Sans" font-weight="bold" font-size="11" fill="#fff" text-anchor="middle">1</text>
<rect x="1361" y="728" width="1" height="40" fill="#3a4a66"/>

</svg>
<div class="tx" style="left:48.10px;top:24.09px;font-size:11.29px;color:#242424;letter-spacing:-0.192px;">AutoSave</div>
<div class="tx" style="left:125.70px;top:23.84px;font-size:12px;color:#242424;letter-spacing:-0.326px;">Off</div>
<div class="tx" style="left:294.50px;top:24.67px;font-size:12.5px;color:#242424;letter-spacing:-0.204px;">Шинэчилсэн сургалтын хөтөлбөрийн зохиолд суурилсан арга зүйд эцэг эхийн оролцоо</div>
<div class="tx" style="left:797.40px;top:24.91px;font-size:11.79px;color:#242424;letter-spacing:-0.256px;">Saved to this PC</div>
<div class="tx" style="left:1164.80px;top:24.67px;font-size:12.5px;color:#fff;letter-spacing:-0.361px;">Sign in</div>
<div class="tx" style="left:21.50px;top:63.67px;font-size:12.5px;color:#242424;letter-spacing:-0.230px;">File</div>
<div class="tx" style="left:123.00px;top:63.67px;font-size:12.5px;color:#242424;letter-spacing:0.242px;">Insert</div>
<div class="tx" style="left:176.00px;top:63.67px;font-size:12.5px;color:#242424;letter-spacing:0.286px;">Draw</div>
<div class="tx" style="left:226.00px;top:63.67px;font-size:12.5px;color:#242424;letter-spacing:0.328px;">Design</div>
<div class="tx" style="left:287.20px;top:63.67px;font-size:12.5px;color:#242424;letter-spacing:0.148px;">Layout</div>
<div class="tx" style="left:346.40px;top:63.67px;font-size:12.5px;color:#242424;letter-spacing:0.070px;">References</div>
<div class="tx" style="left:430.40px;top:63.67px;font-size:12.5px;color:#242424;letter-spacing:0.514px;">Mailings</div>
<div class="tx" style="left:500.50px;top:63.67px;font-size:12.5px;color:#242424;letter-spacing:-0.312px;">Review</div>
<div class="tx" style="left:561.30px;top:63.67px;font-size:12.5px;color:#242424;letter-spacing:-0.414px;">View</div>
<div class="tx" style="left:607.50px;top:63.67px;font-size:12.5px;color:#242424;letter-spacing:0.348px;">Help</div>
<div class="tx" style="left:656.00px;top:63.67px;font-size:12.5px;color:#242424;letter-spacing:0.416px;">Acrobat</div>
<div class="tx" style="left:67.50px;top:63.67px;font-size:12.5px;color:#2a2a2a;font-weight:bold;letter-spacing:0.474px;">Home</div>
<div class="tx" style="left:1303.70px;top:63.67px;font-size:12.5px;color:#fff;letter-spacing:-0.126px;">Share</div>
<div class="tx" style="left:27.60px;top:128.85px;font-size:11.12px;color:#242424;letter-spacing:-0.232px;">Paste</div>
<div class="tx" style="left:20.70px;top:167.52px;font-size:11.5px;color:#242424;letter-spacing:0.122px;">Clipboard</div>
<div class="tx" style="left:107.40px;top:101.67px;font-size:12.5px;color:#1f1f1f;letter-spacing:-0.207px;">Arial</div>
<div class="tx" style="left:234.50px;top:101.67px;font-size:12.5px;color:#1f1f1f;letter-spacing:-0.5px;">12</div>
<div class="tx" style="left:232.40px;top:167.52px;font-size:11.5px;color:#242424;letter-spacing:-0.105px;">Font</div>
<div class="tx" style="left:499.40px;top:167.52px;font-size:11.5px;color:#242424;letter-spacing:-0.089px;">Paragraph</div>
<div class="tx" style="left:822.50px;top:167.80px;font-size:10.68px;color:#242424;letter-spacing:-0.165px;">Styles</div>
<div class="tx" style="left:699.60px;top:119.85px;font-size:14px;color:#000;letter-spacing:0.299px;">Normal</div>
<div class="tx" style="left:795.80px;top:119.85px;font-size:14px;color:#000;letter-spacing:-0.021px;">No Spacing</div>
<div class="tx" style="left:893.30px;top:121.03px;font-size:23px;color:#4a72b8;letter-spacing:0.436px;">Heading</div>
<div class="tx" style="left:1037.20px;top:126.17px;font-size:12.5px;color:#242424;letter-spacing:-0.161px;">Editing</div>
<div class="tx" style="left:1095.20px;top:128.23px;font-size:11.74px;color:#242424;letter-spacing:-0.214px;">Create and Share</div>
<div class="tx" style="left:1110.00px;top:143.91px;font-size:11.8px;color:#242424;letter-spacing:-0.222px;">Adobe PDF</div>
<div class="tx" style="left:1198.60px;top:128.25px;font-size:11.7px;color:#242424;letter-spacing:-0.497px;">Request</div>
<div class="tx" style="left:1191.20px;top:143.90px;font-size:11.82px;color:#242424;letter-spacing:-0.263px;">Signatures</div>
<div class="tx" style="left:1267.00px;top:127.97px;font-size:12.5px;color:#242424;letter-spacing:-0.055px;">Add-ins</div>
<div class="tx" style="left:1132.00px;top:167.52px;font-size:11.5px;color:#242424;letter-spacing:-0.015px;">Adobe Acrobat</div>
<div class="tx" style="left:1268.20px;top:167.52px;font-size:11.5px;color:#242424;letter-spacing:0.010px;">Add-ins</div>
<div class="tx" style="left:12.40px;top:717.02px;font-size:11.5px;color:#242424;letter-spacing:-0.284px;">Page 1 of 13</div>
<div class="tx" style="left:94.30px;top:717.02px;font-size:11.5px;color:#242424;letter-spacing:-0.189px;">3554 words</div>
<div class="tx" style="left:201.30px;top:717.02px;font-size:11.5px;color:#242424;letter-spacing:-0.126px;">English (United States)</div>
<div class="tx" style="left:354.70px;top:717.23px;font-size:10.88px;color:#2e2e2e;font-weight:bold;letter-spacing:-0.196px;">Accessibility: Investigate</div>
<div class="tx" style="left:1030.50px;top:718.23px;font-size:10.88px;color:#242424;letter-spacing:-0.344px;">Focus</div>
<div class="tx" style="left:1337.00px;top:718.24px;font-size:10.85px;color:#242424;letter-spacing:-0.681px;">89%</div>
<div class="tx" style="left:88.20px;top:749.10px;font-size:15px;color:#2b2b2b;letter-spacing:-0.235px;">Type here to search</div>
<div class="tx" style="left:1060.30px;top:749.57px;font-size:12.78px;color:#fff;letter-spacing:-0.152px;">5°C</div>
<div class="tx" style="left:1215.30px;top:748.10px;font-size:12.7px;color:#fff;letter-spacing:0.031px;">МОН</div>
<div class="tx" style="left:1257.20px;top:739.09px;font-size:11.86px;color:#fff;letter-spacing:-0.172px;">11:12 PM</div>
<div class="tx" style="left:1255.90px;top:756.45px;font-size:11.97px;color:#fff;letter-spacing:-0.225px;">11/6/2025</div>
</body></html>
